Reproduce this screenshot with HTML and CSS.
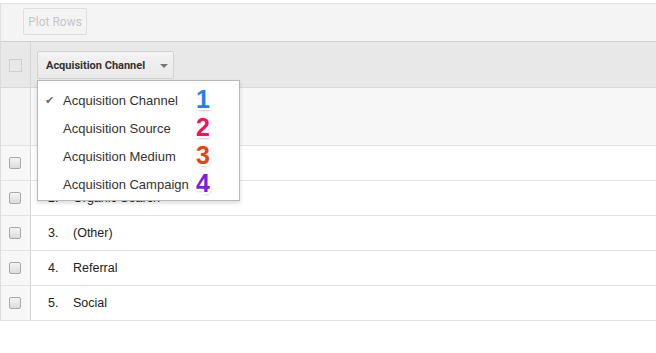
FILE: index.html
```html
<!DOCTYPE html>
<html lang="en">
<head>
    <meta charset="UTF-8">
    <title>Acquisition Report</title>
    <link rel="stylesheet" href="styles.css">
</head>
<body>
<div class="report">
    <div class="toolbar">
        <button class="plot-btn" disabled>Plot Rows</button>
    </div>

    <div class="table">
        <div class="row head-row">
            <div class="check-cell"><span class="box"></span></div>
            <div class="main-cell">
                <div class="dim-picker">
                    <button class="dim-btn">Acquisition Channel <span class="caret"></span></button>
                    <ul class="dim-menu">
                        <li class="selected"><span class="tick">&#10004;</span>Acquisition Channel <b class="num n1">1</b></li>
                        <li>Acquisition Source <b class="num n2">2</b></li>
                        <li>Acquisition Medium <b class="num n3">3</b></li>
                        <li>Acquisition Campaign <b class="num n4">4</b></li>
                    </ul>
                </div>
            </div>
        </div>
        <div class="row sub-row">
            <div class="check-cell"></div>
            <div class="main-cell"></div>
        </div>
        <div class="row data-row">
            <div class="check-cell"><span class="cb"></span></div>
            <div class="main-cell"><span class="idx">1.</span>Direct</div>
        </div>
        <div class="row data-row">
            <div class="check-cell"><span class="cb"></span></div>
            <div class="main-cell"><span class="idx">2.</span>Organic Search</div>
        </div>
        <div class="row data-row">
            <div class="check-cell"><span class="cb"></span></div>
            <div class="main-cell"><span class="idx">3.</span>(Other)</div>
        </div>
        <div class="row data-row">
            <div class="check-cell"><span class="cb"></span></div>
            <div class="main-cell"><span class="idx">4.</span>Referral</div>
        </div>
        <div class="row data-row">
            <div class="check-cell"><span class="cb"></span></div>
            <div class="main-cell"><span class="idx">5.</span>Social</div>
        </div>
    </div>
</div>
</body>
</html>
```

FILE: styles.css
```css
body {
    margin: 0;
    background: #fff;
    font-family: "Liberation Sans", Arial, sans-serif;
    color: #222;
}
.report {
    padding-top: 3px;
}
.toolbar {
    background: #f4f4f4;
    border-top: 1px solid #e3e3e3;
    border-left: 1px solid #e0e0e0;
    height: 38px;
    padding: 4px 0 0 22px;
    box-sizing: border-box;
}
.plot-btn {
    width: 64px;
    height: 27px;
    background: #f4f4f4;
    border: 1px solid #dedede;
    border-radius: 2px;
    color: #c6c6c6;
    font-family: Roboto, sans-serif;
    font-size: 12px;
    padding: 0;
}
.table {
    border-left: 1px solid #dcdcdc;
}
.row {
    display: flex;
    border-bottom: 1px solid #e2e2e2;
}
.check-cell {
    width: 29px;
    border-right: 1px solid #d6d6d6;
    display: flex;
    align-items: center;
    justify-content: center;
    flex-shrink: 0;
}
.main-cell {
    flex: 1;
    display: flex;
    align-items: center;
}
.head-row {
    height: 45px;
    background: #e8e8e8;
    border-top: 1px solid #cfcfcf;
    border-bottom: 1px solid #d8d8d8;
}
.head-row .main-cell {
    padding-left: 6px;
}
.box {
    width: 11px;
    height: 11px;
    border: 1px solid #cfcfcf;
    margin-top: 1px;
}
.dim-picker {
    position: relative;
}
.dim-btn {
    height: 28px;
    width: 137px;
    margin-top: 1px;
    background: linear-gradient(#f3f3f3, #e9e9e9);
    border: 1px solid #d2d2d2;
    border-radius: 2px;
    font-family: Roboto, sans-serif;
    font-weight: bold;
    font-size: 11px;
    color: #333;
    text-align: left;
    padding: 0 0 0 8px;
    display: flex;
    align-items: center;
}
.caret {
    margin-left: 15px;
    border-left: 4px solid transparent;
    border-right: 4px solid transparent;
    border-top: 4px solid #777;
    margin-top: 2px;
}
.dim-menu {
    position: absolute;
    top: 30px;
    left: 0;
    width: 201px;
    margin: 0;
    padding: 5px 0 2px;
    list-style: none;
    background: #fff;
    border: 1px solid #b9b9b9;
    box-shadow: 0 2px 4px rgba(0, 0, 0, 0.15);
    z-index: 5;
}
.dim-menu li {
    height: 28px;
    display: flex;
    align-items: center;
    padding-left: 25px;
    font-size: 13px;
    color: #333;
    position: relative;
}
.tick {
    position: absolute;
    left: 7px;
    color: #6a6a6a;
    font-family: "DejaVu Sans", sans-serif;
    font-size: 11px;
}
.num {
    position: absolute;
    left: 158px;
    top: 1px;
    font-family: "Liberation Sans", Arial, sans-serif;
    font-weight: bold;
    font-size: 25px;
    line-height: 25px;
    text-shadow: -2px 0 #fff, 2px 0 #fff, 0 -2px #fff, 0 2px #fff,
        -2px -2px #fff, 2px 2px #fff, -2px 2px #fff, 2px -2px #fff,
        1px 2px 3px rgba(0, 0, 0, 0.45);
}
.n1 { color: #2a7ee8; }
.n2 { color: #f2125d; }
.n3 { color: #ea430e; }
.n4 { color: #7b1ee3; }
.sub-row {
    height: 57px;
    background: #f7f7f7;
}
.sub-row .check-cell {
    background: #f4f4f4;
}
.data-row {
    height: 34px;
    font-size: 12.5px;
}
.data-row .check-cell {
    background: #f7f7f7;
}
.data-row .main-cell {
    padding-left: 17px;
}
.idx {
    width: 25px;
}
.cb {
    width: 10px;
    height: 10px;
    border: 1px solid #a9a9a9;
    border-radius: 2px;
    background: linear-gradient(#f4f4f4, #dcdcdc);
    margin-left: -2px;
}
```
